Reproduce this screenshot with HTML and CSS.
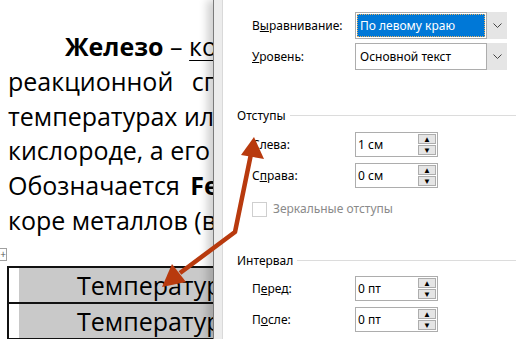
FILE: index.html
```html
<!DOCTYPE html>
<html lang="ru">
<head>
    <meta charset="UTF-8">
    <title>Абзац</title>
    <link rel="stylesheet" href="styles.css">
</head>
<body>

<div class="screen">
    <!-- Document page behind the dialog -->
    <div class="doc">
        <div class="text">
            <div class="line first"><b>Железо</b> – <u>коррозии</u></div>
            <div class="line wide">реакционной сп</div>
            <div class="line">температурах или</div>
            <div class="line">кислороде, а его</div>
            <div class="line mid">Обозначается <b>Fe</b></div>
            <div class="line">коре металлов (в</div>
        </div>

        <div class="handle">+</div>
        <div class="grid">
            <div class="trow"><span class="blank"></span><span class="cell">Температура</span></div>
            <div class="trow"><span class="blank"></span><span class="cell">Температура</span></div>
        </div>
    </div>

    <!-- Paragraph dialog -->
    <div class="dialog">
        <div class="frame"></div>
        <div class="page">
            <div class="row">
                <span class="label">В<u>ы</u>равнивание:</span>
                <div class="select">
                    <span class="value selected">По левому краю</span>
                    <span class="drop">
                        <svg width="9" height="5" viewBox="0 0 9 5"><polyline points="0.5,0.5 4.5,4.5 8.5,0.5" fill="none" stroke="#444" stroke-width="1"/></svg>
                    </span>
                </div>
            </div>
            <div class="row">
                <span class="label"><u>У</u>ровень:</span>
                <div class="select">
                    <span class="value">Основной текст</span>
                    <span class="drop">
                        <svg width="9" height="5" viewBox="0 0 9 5"><polyline points="0.5,0.5 4.5,4.5 8.5,0.5" fill="none" stroke="#444" stroke-width="1"/></svg>
                    </span>
                </div>
            </div>

            <div class="group indents">
                <span>Отступы</span>
                <i class="rule"></i>
            </div>
            <div class="row spin-row">
                <span class="label"><u>С</u>лева:</span>
                <div class="spinner">
                    <span class="value">1 см</span>
                    <span class="arrows"><span class="up">▲</span><span class="down">▼</span></span>
                </div>
            </div>
            <div class="row spin-row">
                <span class="label">С<u>п</u>рава:</span>
                <div class="spinner">
                    <span class="value">0 см</span>
                    <span class="arrows"><span class="up">▲</span><span class="down">▼</span></span>
                </div>
            </div>
            <div class="check">
                <span class="box"></span>
                <span>Зеркальные отступы</span>
            </div>

            <div class="group spacing">
                <span>Интервал</span>
                <i class="rule"></i>
            </div>
            <div class="row spin-row">
                <span class="label">П<u>е</u>ред:</span>
                <div class="spinner">
                    <span class="value">0 пт</span>
                    <span class="arrows"><span class="up">▲</span><span class="down">▼</span></span>
                </div>
            </div>
            <div class="row spin-row">
                <span class="label">П<u>о</u>сле:</span>
                <div class="spinner">
                    <span class="value">0 пт</span>
                    <span class="arrows"><span class="up">▲</span><span class="down">▼</span></span>
                </div>
            </div>
        </div>
    </div>

    <!-- Annotation arrow drawn over everything -->
    <svg class="arrow" width="516" height="339" viewBox="0 0 516 339">
        <polyline points="251,154 235,232 180,273" fill="none" stroke="#b83a0e" stroke-width="4.5" stroke-linejoin="round"/>
        <polygon points="254,137 264,159 241,155" fill="#b83a0e"/>
        <polygon points="162,287 172,264 186,282" fill="#b83a0e"/>
    </svg>
</div>

</body>
</html>
```

FILE: styles.css
```css
body {
    margin: 0;
    padding: 0;
    background-color: #fff;
}
.screen {
    position: relative;
    display: flex;
    width: 516px;
    height: 339px;
    overflow: hidden;
}

/* document */
.doc {
    width: 213px;
    flex-shrink: 0;
    overflow: hidden;
    padding: 29px 0 0 8px;
    box-sizing: border-box;
    font-family: 'Open Sans', sans-serif;
    font-size: 25px;
    color: #000;
}
.line {
    white-space: nowrap;
    line-height: 34.8px;
}
.line.first {
    padding-left: 57px;
}
.line u {
    text-decoration-thickness: 1px;
    text-underline-offset: 4px;
}
.line.wide {
    word-spacing: 12px;
}
.line.mid {
    word-spacing: 4px;
}
.handle {
    width: 11px;
    height: 11px;
    margin: 10px 0 5px -14px;
    border: 1px solid #a0a0a0;
    font-size: 10px;
    line-height: 11px;
    text-align: right;
    color: #555;
    background: #fff;
}
.grid {
    width: 260px;
    margin-left: -1px;
    border-top: 2px solid #111;
    border-left: 2px solid #111;
}
.trow {
    display: flex;
    height: 34px;
    border-bottom: 2px solid #111;
}
.blank {
    width: 10px;
    flex-shrink: 0;
}
.cell {
    flex: 1;
    background-color: #c9c9c9;
    padding-left: 58px;
    white-space: nowrap;
    line-height: 34px;
}

/* dialog */
.dialog {
    flex: 1;
    display: flex;
    border-left: 1px solid #7a7a7a;
    box-shadow: -6px 0 8px rgba(0, 0, 0, 0.18);
    z-index: 1;
    font-family: 'Noto Sans', sans-serif;
    font-size: 12px;
    color: #000;
}
.frame {
    width: 8px;
    background-color: #ececec;
    border-right: 1px solid #d9d9d9;
}
.page {
    flex: 1;
    background-color: #fff;
    padding: 12px 0 0 14px;
}
.row {
    display: flex;
    align-items: center;
    padding-left: 15px;
    margin-bottom: 4px;
}
.label {
    width: 103px;
    white-space: nowrap;
}
.select {
    display: flex;
    width: 152px;
    height: 27px;
    box-sizing: border-box;
    border: 1px solid #adadad;
    padding: 1px;
}
.select .value {
    flex: 1;
    padding-left: 3px;
    line-height: 23px;
    white-space: nowrap;
}
.select .selected {
    background-color: #0078d7;
    color: #fff;
    outline: 1px dotted #e8b060;
    outline-offset: -1px;
    margin-right: 1px;
}
.drop {
    width: 20px;
    margin: -2px -2px -2px 0;
    background-color: #e5e5e5;
    border-left: 1px solid #adadad;
    display: flex;
    align-items: center;
    justify-content: center;
}

.group {
    display: flex;
    align-items: center;
    height: 16px;
}
.group .rule {
    flex: 1;
    height: 1px;
    background-color: #dcdcdc;
    margin-left: 4px;
}
.group.indents {
    margin: 37px 0 9px;
}
.group.spacing {
    margin: 35px 0 8px;
}
.spin-row {
    margin-bottom: 6px;
}
.spinner {
    display: flex;
    width: 83px;
    height: 25px;
    box-sizing: border-box;
    border: 1px solid #adadad;
}
.spinner .value {
    flex: 1;
    padding-left: 2px;
    line-height: 23px;
}
.arrows {
    display: flex;
    flex-direction: column;
    width: 18px;
    margin: 1px;
    gap: 1px;
}
.arrows span {
    flex: 1;
    background-color: #e5e5e5;
    border: 1px solid #adadad;
    font-size: 8px;
    line-height: 8px;
    text-align: center;
    color: #000;
}
.check {
    display: flex;
    align-items: center;
    padding-left: 15px;
    margin-top: 13px;
    color: #8a8a8a;
    line-height: 16px;
}
.check .box {
    width: 13px;
    height: 13px;
    border: 1px solid #cfcfcf;
    margin-right: 6px;
}

.arrow {
    position: absolute;
    left: 0;
    top: 0;
    z-index: 2;
    pointer-events: none;
}
```
